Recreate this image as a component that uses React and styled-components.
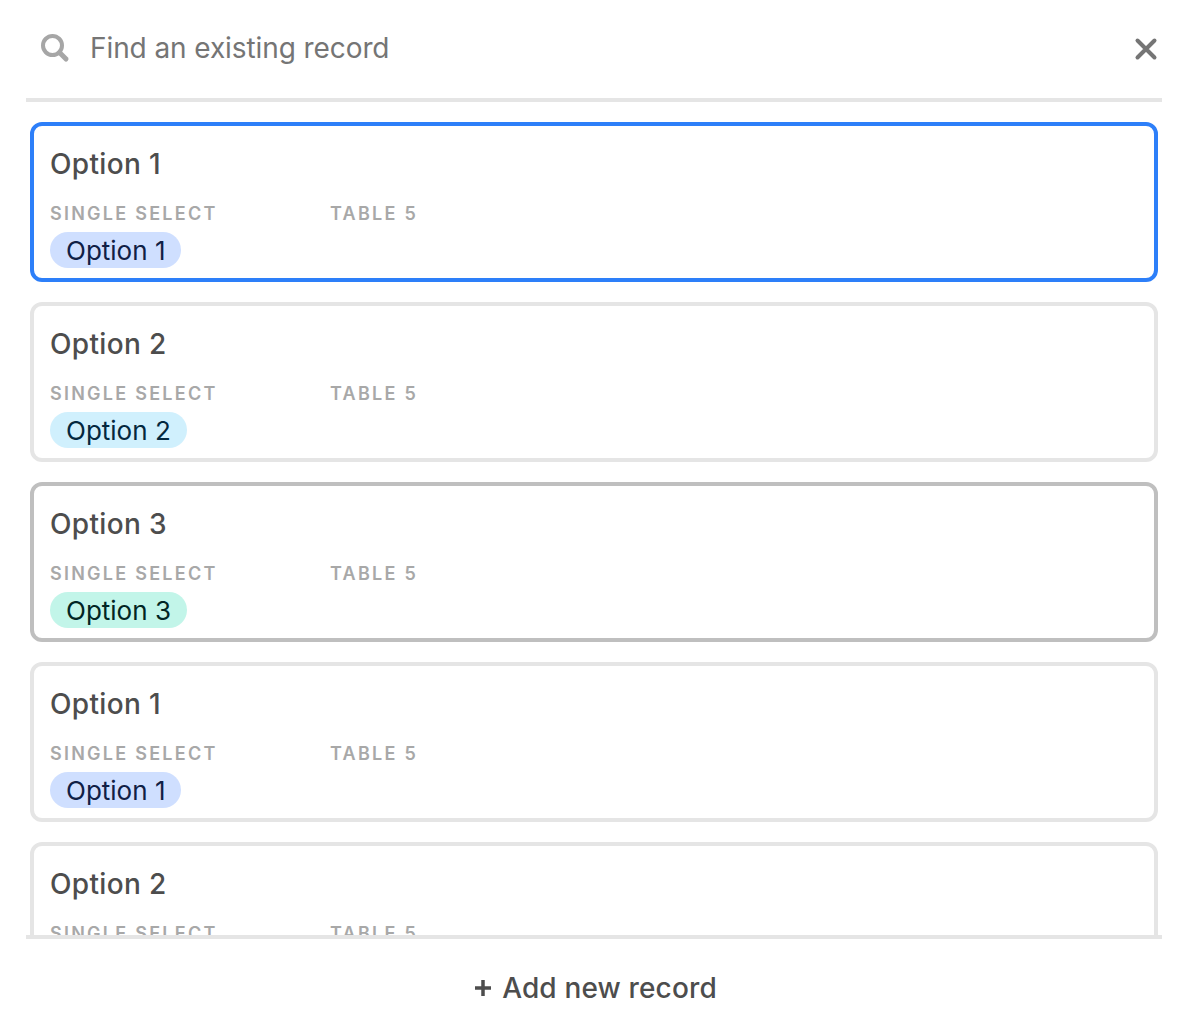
import styled, { createGlobalStyle } from "styled-components";

const GlobalStyle = createGlobalStyle`
  html, body {
    margin: 0;
    padding: 0;
    background: #fff;
    font-family: Inter, "Liberation Sans", sans-serif;
  }
`;

const Container = styled.div`
  width: 1186px;
  height: 1034px;
  padding: 0 24px 0 26px;
  box-sizing: border-box;
  display: flex;
  flex-direction: column;
  overflow: hidden;
`;

const SearchBar = styled.div`
  height: 102px;
  flex: none;
  box-sizing: border-box;
  border-bottom: 4px solid #e5e5e5;
  display: flex;
  align-items: center;
  padding: 0 0 2px 14px;
`;

const SearchText = styled.div`
  flex: 1;
  margin-left: 20px;
  font-size: 28px;
  line-height: 36px;
  letter-spacing: -0.09px;
  color: #757575;
`;

const CloseButton = styled.svg`
  display: block;
  width: 32px;
  height: 32px;
  margin-top: 2px;
`;

const List = styled.div`
  flex: 1;
  min-height: 0;
  overflow: hidden;
  padding: 20px 4px 0;
  display: flex;
  flex-direction: column;
  gap: 20px;
`;

const Card = styled.div`
  flex: none;
  height: 160px;
  box-sizing: border-box;
  border: 4px solid ${(p) => p.$border};
  border-radius: 12px;
  background: #fff;
  padding: 20px 16px 0;
`;

const Title = styled.div`
  font-size: 28px;
  line-height: 36px;
  font-weight: 500;
  letter-spacing: 0.35px;
  color: #4d4d4d;
`;

const Fields = styled.div`
  display: flex;
  margin-top: 20px;
`;

const Field = styled.div`
  width: 280px;
  flex: none;
`;

const Label = styled.div`
  font-size: 18px;
  line-height: 24px;
  font-weight: 600;
  letter-spacing: 2.25px;
  color: #a8a8a8;
  white-space: nowrap;
`;

const Pill = styled.div`
  display: inline-block;
  margin-top: 6px;
  height: 36px;
  line-height: 38px;
  padding: 0 16px;
  border-radius: 18px;
  font-size: 26px;
  background: ${(p) => p.$bg};
  color: ${(p) => p.$fg};
`;

const Footer = styled.div`
  height: 99px;
  flex: none;
  box-sizing: border-box;
  border-top: 4px solid #e5e5e5;
  display: flex;
  align-items: center;
  justify-content: center;
  gap: 10px;
  padding: 3px 0 0 3px;
  font-size: 28px;
  font-weight: 500;
  letter-spacing: 0.15px;
  color: #4d4d4d;
`;

const Plus = styled.svg`
  display: block;
  width: 18px;
  height: 18px;
`;

const pills = {
  1: { bg: "#cfdfff", fg: "#102046" },
  2: { bg: "#d0f0fd", fg: "#04283f" },
  3: { bg: "#c2f5e9", fg: "#012524" },
};

const records = [
  { n: 1, border: "#2d7ff9" },
  { n: 2, border: "#e5e5e5" },
  { n: 3, border: "#bfbfbf" },
  { n: 1, border: "#e5e5e5" },
  { n: 2, border: "#e5e5e5" },
];

function SearchIcon() {
  return (
    <svg width="30" height="30" viewBox="0 0 30 30" fill="none">
      <circle cx="12.5" cy="12.5" r="9.5" stroke="#a6a6a6" strokeWidth="4" />
      <path d="M19.5 19.5L26 26" stroke="#a6a6a6" strokeWidth="5" strokeLinecap="round" />
    </svg>
  );
}

export default function App() {
  return (
    <Container>
      <GlobalStyle />
      <SearchBar>
        <SearchIcon />
        <SearchText>Find an existing record</SearchText>
        <CloseButton viewBox="0 0 32 32" fill="none">
          <path d="M7.5 7.5L24.5 24.5M24.5 7.5L7.5 24.5" stroke="#757575" strokeWidth="4" strokeLinecap="round" />
        </CloseButton>
      </SearchBar>
      <List>
        {records.map((r, i) => (
          <Card key={i} $border={r.border}>
            <Title>Option {r.n}</Title>
            <Fields>
              <Field>
                <Label>SINGLE SELECT</Label>
                <Pill $bg={pills[r.n].bg} $fg={pills[r.n].fg}>Option {r.n}</Pill>
              </Field>
              <Field>
                <Label>TABLE 5</Label>
              </Field>
            </Fields>
          </Card>
        ))}
      </List>
      <Footer>
        <Plus viewBox="0 0 18 18" fill="none">
          <path d="M9 1V17M1 9H17" stroke="#4d4d4d" strokeWidth="3.5" />
        </Plus>
        Add new record
      </Footer>
    </Container>
  );
}
